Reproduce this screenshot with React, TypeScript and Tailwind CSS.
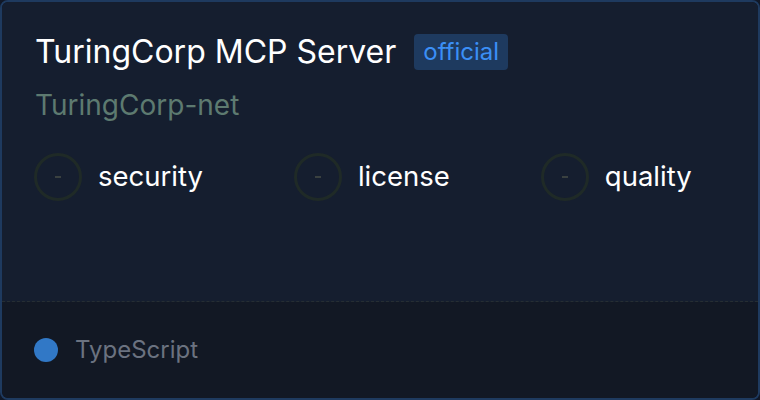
import React from 'react';

const checks = ['security', 'license', 'quality'];

export default function App() {
  return <div className="w-[760px] h-[400px] bg-[#111827]" style={{ fontFamily: 'Inter, "Noto Sans", sans-serif' }}>
      <div className="w-full h-full flex flex-col rounded-lg border-2 border-[#1e3a5f] overflow-hidden">
        <div className="flex-1 bg-[#151e2f] px-[32px] pt-[30px] border-b border-dashed border-[#262e33]">
          <div className="flex items-center gap-[18px] pl-px">
            <h1 className="text-[32px] leading-[40px] text-white">TuringCorp MCP Server</h1>
            <span className="rounded bg-[#1e3a5f] px-[9px] h-[36px] flex items-center text-[24px] text-[#3b8ff6]">
              official
            </span>
          </div>
          <div className="mt-[15px] pl-px text-[28px] leading-[36px] text-[#5d7a70]">TuringCorp-net</div>
          <div className="mt-[30px] flex items-center gap-[91px]">
            {checks.map(c => <div key={c} className="flex items-center gap-4">
                <div className="w-12 h-12 rounded-full border-[3px] border-[#1f2a27] flex items-center justify-center">
                  <span className="block w-[6px] h-[2px] bg-[#3a4140]"></span>
                </div>
                <span className="text-[27.5px] text-white">{c}</span>
              </div>)}
          </div>
        </div>
        <div className="h-[96px] bg-[#121824] px-[32px] flex items-center gap-[17px]">
          <span className="w-6 h-6 rounded-full bg-[#3178c6]"></span>
          <span className="text-[24px] text-[#6b7280]">TypeScript</span>
        </div>
      </div>
    </div>;
}
